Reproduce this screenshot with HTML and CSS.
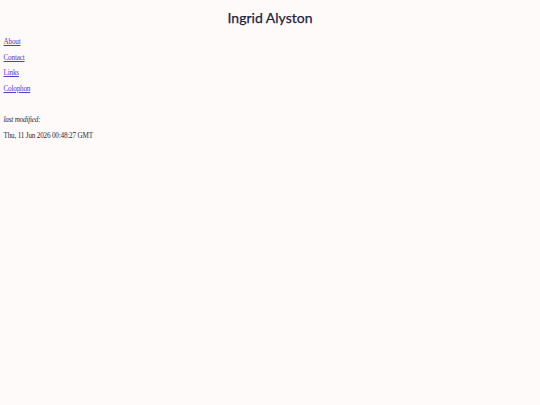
FILE: index.html
```html
<!DOCTYPE html>
<html>
<head>
<meta charset="utf-8">
<link rel="stylesheet" href="styles.css">
</head>
<body>
<header class="site-header"><h1 class="site-title">Ingrid Alyston</h1></header>
<nav class="site-nav">
<p class="nav-item"><a href="#">About</a></p>
<p class="nav-item"><a href="#">Contact</a></p>
<p class="nav-item"><a href="#">Links</a></p>
<p class="nav-item"><a href="#">Colophon</a></p>
</nav>
<footer class="site-footer">
<p class="modified-label">last modified:</p>
<p class="modified-date">Thu, 11 Jun 2026 00:48:27 GMT</p>
</footer>
</body>
</html>
```
FILE: styles.css
```css
html, body {
  margin: 0;
  padding: 0;
  background: #fffafa;
}
body {
  font-family: "Liberation Serif", serif;
  font-size: 7.2px;
  letter-spacing: -0.2px;
  color: #2a2a33;
  padding: 0 3.5px;
}
.site-header {
  text-align: center;
  padding-top: 8px;
}
.site-title {
  margin: 0;
  font-family: "Lato", sans-serif;
  font-weight: 400;
  font-size: 14px;
  line-height: 20px;
  letter-spacing: 0;
  color: #22223a;
  -webkit-text-stroke: 0.25px #22223a;
}
.site-nav {
  margin-top: 10px;
}
.nav-item {
  margin: 0 0 6px 0;
  line-height: 9.5px;
}
.nav-item a {
  color: #4b3dc8;
}
.site-footer {
  margin-top: 22px;
}
.modified-label {
  font-style: italic;
  margin: 0 0 6px 0;
  line-height: 9.5px;
}
.modified-date {
  margin: 0;
  line-height: 9.5px;
}
```
